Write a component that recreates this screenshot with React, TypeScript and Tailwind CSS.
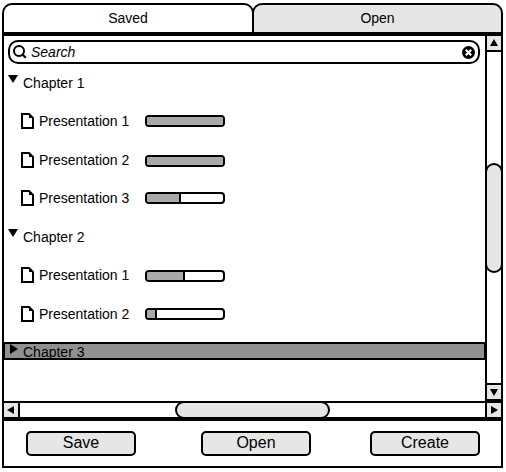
import React from "react";

type Item = { name: string; fill: string; row: string; bar: string };

const chapterOne: Item[] = [
  { name: "Presentation 1", fill: "w-full", row: "mb-px", bar: "mt-[13px]" },
  { name: "Presentation 2", fill: "w-full", row: "", bar: "mt-[14px]" },
  { name: "Presentation 3", fill: "w-[34px] border-r-2", row: "mb-px", bar: "mt-[13px]" },
];
const chapterTwo: Item[] = [
  { name: "Presentation 1", fill: "w-[38px] border-r-2", row: "mb-px", bar: "mt-[14px]" },
  { name: "Presentation 2", fill: "w-[10px] border-r-2", row: "mb-[9px]", bar: "mt-[13px]" },
];

function Presentation({ item }: { item: Item }) {
  return (
    <div className={`flex h-[38px] shrink-0 pl-[17px] ${item.row}`}>
      <svg className="mt-[11px] h-4 w-[13px]" viewBox="0 0 13 16">
        <path d="M1 1h7l4 4v10H1z" fill="white" stroke="black" strokeWidth="2" />
        <path d="M8 1v4h4z" fill="black" />
      </svg>
      <span className="ml-[5px] w-[106px] leading-[38px]">{item.name}</span>
      <div className={`h-3 w-20 overflow-hidden rounded-[4px] border-2 border-black bg-white ${item.bar}`}>
        <div className={`h-full border-black bg-[#a9a9a9] ${item.fill}`} />
      </div>
    </div>
  );
}

function Chapter({ name, className = "" }: { name: string; className?: string }) {
  return (
    <div className={`flex h-[38px] shrink-0 pl-1 ${className}`}>
      <svg className="mt-[11px] h-2 w-[10px]" viewBox="0 0 10 8">
        <path d="M0 0h10L5 8z" />
      </svg>
      <span className="ml-[5px] leading-[38px]">{name}</span>
    </div>
  );
}

function Arrow({ d }: { d: string }) {
  return (
    <svg className="block h-[14px] w-[14px] shrink-0 bg-[#e6e6e6]" viewBox="0 0 14 14">
      <path d={d} />
    </svg>
  );
}

const button =
  "flex h-[25px] w-[110px] justify-center rounded-[5px] border-2 border-black bg-[#e6e6e6] text-base leading-[20px]";

export default function App() {
  return (
    <div className="h-[472px] w-[506px] bg-white pt-[3px] pl-[2px] font-['Liberation_Sans',Arial,sans-serif] text-sm text-black">
      <div className="flex h-[29px] w-[501px]">
        <div className="w-[252px] rounded-t-[10px] border-2 border-b-0 border-black text-center leading-[26px]">Saved</div>
        <div className="-ml-[2px] w-[251px] rounded-t-[10px] border-2 border-b-0 border-black bg-[#e6e6e6] text-center leading-[26px]">
          Open
        </div>
      </div>

      <div className="flex h-[436px] w-[501px] flex-col border-x-2 border-t-4 border-b-2 border-black">
        <div className="flex h-[365px]">
          <div className="flex w-[481px] flex-col">
            <div className="mt-1 ml-1 flex h-6 w-[472px] shrink-0 items-center rounded-[10px] border-2 border-black pr-[3px] pl-[3px]">
              <svg className="h-[14px] w-[14px]" viewBox="0 0 14 14" fill="none" stroke="black" strokeWidth="2">
                <circle cx="6" cy="6" r="5" />
                <path d="m9.2 9.2 3.6 3.6" strokeWidth="2.2" />
              </svg>
              <span className="ml-1 grow italic">Search</span>
              <svg className="h-[13px] w-[13px]" viewBox="0 0 13 13">
                <circle cx="6.5" cy="6.5" r="6.5" />
                <path d="m3.8 3.8 5.4 5.4m0-5.4-5.4 5.4" stroke="white" strokeWidth="2.2" />
              </svg>
            </div>

            <Chapter name="Chapter 1" />
            {chapterOne.map((item) => <Presentation key={item.name} item={item} />)}
            <Chapter name="Chapter 2" />
            {chapterTwo.map((item) => <Presentation key={item.name} item={item} />)}

            <div className="-ml-px flex h-[18px] w-[483px] shrink-0 overflow-hidden border-2 border-black bg-[#919191] pl-[5px]">
              <svg className="h-[10px] w-2" viewBox="0 0 8 10">
                <path d="M0 0v10l8-5z" />
              </svg>
              <span className="ml-[5px] leading-4">Chapter 3</span>
            </div>
          </div>

          <div className="flex h-[365px] w-4 flex-col border-l-2 border-black">
            <Arrow d="M7 3 11 10H3z" />
            <div className="h-[335px] border-y-2 border-black pt-[111px]">
              <div className="-ml-[2px] h-[110px] w-[18px] rounded-[9px] border-2 border-black bg-[#e6e6e6]" />
            </div>
            <Arrow d="M3 4h8l-4 7z" />
            <div className="h-[2px] bg-black" />
          </div>
        </div>

        <div className="flex h-5 shrink-0 border-t-2 border-b-4 border-black">
          <Arrow d="M10 3v8L3 7z" />
          <div className="w-[469px] border-x-2 border-black pl-[155px]">
            <div className="-mt-[2px] h-[18px] w-[155px] rounded-[9px] border-2 border-black bg-[#e6e6e6]" />
          </div>
          <Arrow d="M4 3v8l7-4z" />
        </div>

        <div className="flex grow pt-[10px] pl-[22px]">
          <button className={button}>Save</button>
          <button className={`ml-[65px] ${button}`}>Open</button>
          <button className={`ml-[59px] ${button}`}>Create</button>
        </div>
      </div>
    </div>
  );
}
